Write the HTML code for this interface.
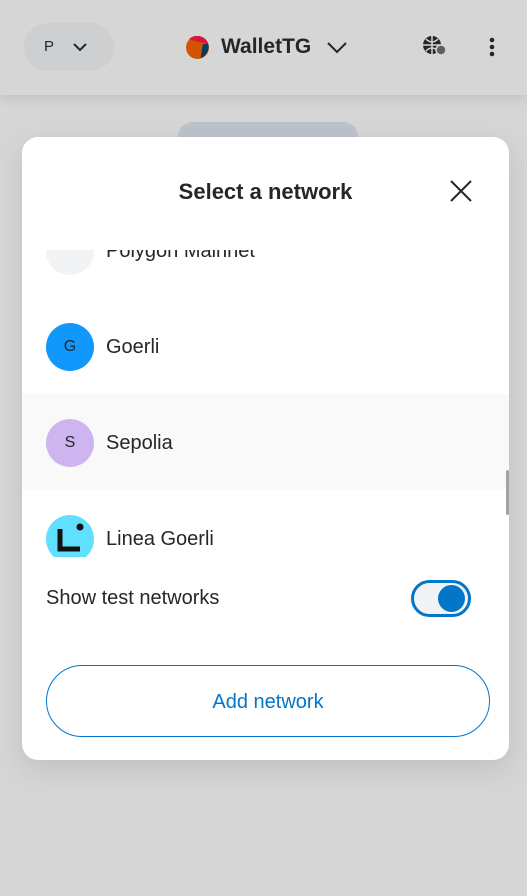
<!DOCTYPE html>
<html><head><meta charset="utf-8"><style>
*{margin:0;padding:0;box-sizing:border-box}
body{width:527px;height:896px;overflow:hidden;background:#d6d6d6;font-family:"Liberation Sans",sans-serif;position:relative;color:#24272a}
.hdr{position:absolute;left:0;top:0;width:527px;height:95px;background:#d6d6d6;box-shadow:0 2px 12px rgba(0,0,0,.12)}
.acct{position:absolute;left:24px;top:23px;width:90px;height:48px;border-radius:24px;background:#cdcfd1}
.abs{position:absolute}
.modal{position:absolute;left:22px;top:137px;width:487px;height:623px;background:#fff;border-radius:16px;overflow:hidden;box-shadow:0 10px 30px rgba(0,0,0,.1)}
.title{position:absolute;left:0;width:100%;top:42px;text-align:center;font-weight:bold;font-size:22px;color:#24272a}
.list{position:absolute;left:0;top:113px;width:487px;height:307px;overflow:hidden}
.item{position:absolute;left:0;width:487px;height:96px}
.av{position:absolute;left:24px;top:25px;width:48px;height:48px;border-radius:50%;text-align:center;line-height:48px;font-size:16px}
.nm{position:absolute;left:84px;top:38px;font-size:20px}
</style></head><body>
<div class="hdr">
 <div class="acct"><span class="abs" style="left:20px;top:15px;font-size:15px">P</span>
  <svg class="abs" style="left:48px;top:18px" width="16" height="12" viewBox="0 0 16 12"><path d="M2 3l6 6 6-6" fill="none" stroke="#24272a" stroke-width="2"/></svg></div>
 <svg class="abs" style="left:186px;top:36px" width="23" height="23" viewBox="0 0 22 22"><circle cx="11" cy="11" r="11" fill="#d35400"/><path d="M3 3A11 11 0 0 1 21 7L13 6Z" fill="#dc143c"/><path d="M21 7A11 11 0 0 1 14 21L16 8Z" fill="#0b3a5a"/></svg>
 <div class="abs" style="left:221px;top:35px;font-size:21px;font-weight:bold">WalletTG</div>
 <svg class="abs" style="left:326px;top:39px" width="22" height="16" viewBox="0 0 22 16"><path d="M2 4l9 9 9-9" fill="none" stroke="#24272a" stroke-width="2"/></svg>
 <svg class="abs" style="left:421px;top:34px" width="28" height="24" viewBox="0 0 28 24"><circle cx="11" cy="11" r="9" fill="#24272a"/><path d="M2 11h18M11 2v18M5 5q6 6 12 0M5 17q6-6 12 0" stroke="#d6d6d6" stroke-width="1.5" fill="none"/><circle cx="20" cy="16" r="5" fill="#5c6168" stroke="#d6d6d6" stroke-width="1.5"/></svg>
 <svg class="abs" style="left:487px;top:36px" width="10" height="22" viewBox="0 0 10 22"><circle cx="5" cy="4" r="2.3" fill="#24272a"/><circle cx="5" cy="11" r="2.3" fill="#24272a"/><circle cx="5" cy="18" r="2.3" fill="#24272a"/></svg>
</div>
<div class="abs" style="left:178px;top:122px;width:180px;height:30px;border-radius:16px;background:#bcc3ca"></div>
<div class="modal">
 <div class="title">Select a network</div>
 <svg class="abs" style="left:428px;top:43px" width="22" height="22" viewBox="0 0 22 22"><path d="M1 1l20 20M21 1L1 21" stroke="#24272a" stroke-width="2"/></svg>
 <div class="list">
  <div class="item" style="top:-48px"><div class="av" style="background:#f2f3f4"></div><div class="nm">Polygon Mainnet</div></div>
  <div class="item" style="top:48px"><div class="av" style="background:#1098fc;color:#24272a">G</div><div class="nm">Goerli</div></div>
  <div class="item" style="top:144px;background:#f9f9f9"><div class="av" style="background:#cfb5f0;color:#24272a">S</div><div class="nm">Sepolia</div></div>
  <div class="item" style="top:240px"><div class="av" style="background:#61dfff">
   <svg class="abs" style="left:0;top:0" width="48" height="48" viewBox="0 0 48 48"><path d="M14 14v20h20" fill="none" stroke="#121212" stroke-width="5"/><circle cx="34" cy="12" r="3.5" fill="#121212"/></svg></div><div class="nm">Linea Goerli</div></div>
 </div>
 <div class="abs" style="left:484px;top:333px;width:3px;height:45px;background:#9fa4a8;border-radius:2px"></div>
 <div class="abs" style="left:24px;top:450px;font-size:20px">Show test networks</div>
 <div class="abs" style="left:389px;top:443px;width:60px;height:37px;border-radius:19px;border:3px solid #0376c9;background:#f2f3f4"><div class="abs" style="left:24px;top:2px;width:27px;height:27px;border-radius:50%;background:#0376c9"></div></div>
 <div class="abs" style="left:24px;top:528px;width:444px;height:72px;border-radius:36px;border:1px solid #0376c9;color:#0376c9;font-size:20px;text-align:center;line-height:72px">Add network</div>
</div>
</body></html>
